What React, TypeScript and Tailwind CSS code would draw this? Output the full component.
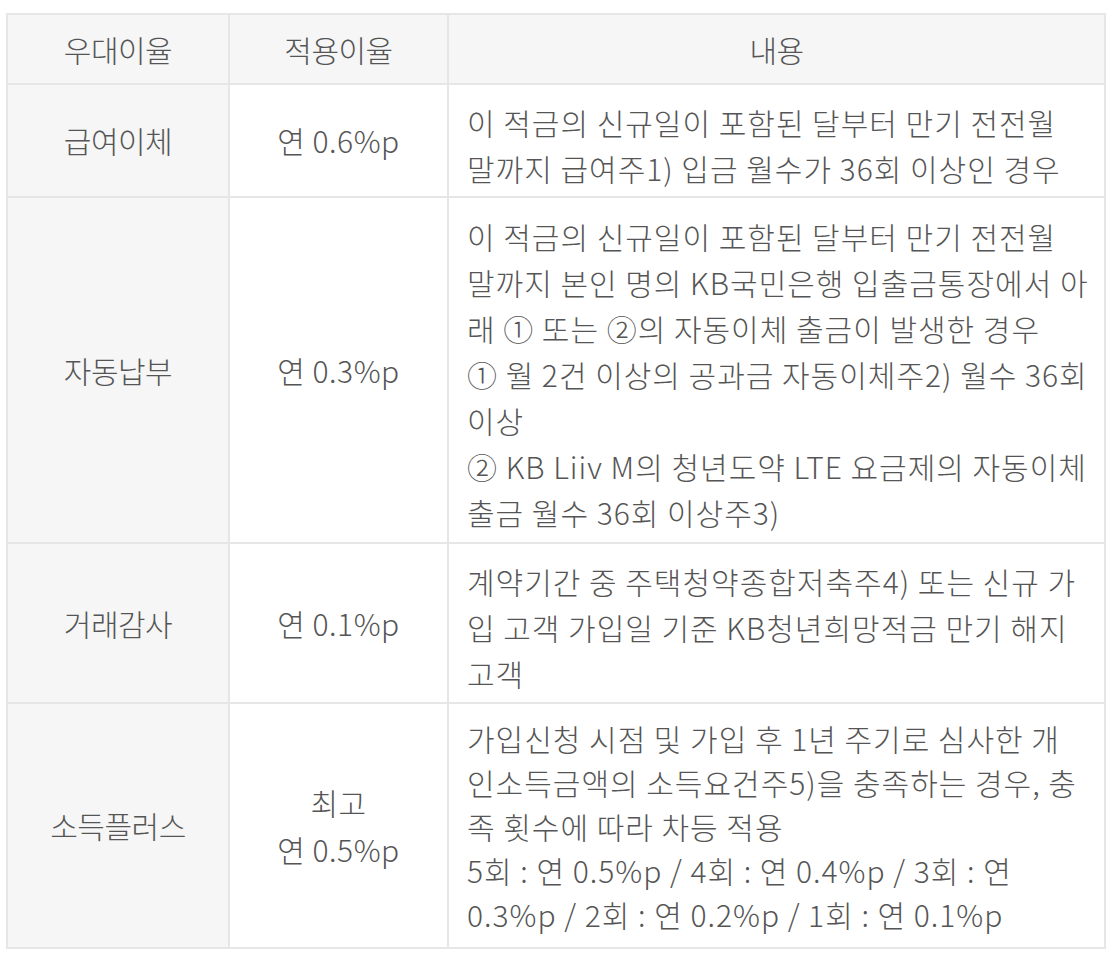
const rows = [
  {
    name: "급여이체",
    rate: ["연 0.6%p"],
    h: "h-[111px]",
    text: "pt-[8px] leading-[46px]",
    lines: [
      "이 적금의 신규일이 포함된 달부터 만기 전전월",
      "말까지 급여주1) 입금 월수가 36회 이상인 경우",
    ],
  },
  {
    name: "자동납부",
    rate: ["연 0.3%p"],
    h: "h-[344px]",
    text: "pt-[8px] leading-[46px]",
    lines: [
      "이 적금의 신규일이 포함된 달부터 만기 전전월",
      "말까지 본인 명의 KB국민은행 입출금통장에서 아",
      "래 ① 또는 ②의 자동이체 출금이 발생한 경우",
      "① 월 2건 이상의 공과금 자동이체주2) 월수 36회",
      "이상",
      "② KB Liiv M의 청년도약 LTE 요금제의 자동이체",
      "출금 월수 36회 이상주3)",
    ],
  },
  {
    name: "거래감사",
    rate: ["연 0.1%p"],
    h: "h-[158px]",
    text: "pt-[8px] leading-[46px]",
    lines: [
      "계약기간 중 주택청약종합저축주4) 또는 신규 가",
      "입 고객 가입일 기준 KB청년희망적금 만기 해지",
      "고객",
    ],
  },
  {
    name: "소득플러스",
    rate: ["최고", "연 0.5%p"],
    h: "h-[243px]",
    text: "leading-[44px]",
    lines: [
      "가입신청 시점 및 가입 후 1년 주기로 심사한 개",
      "인소득금액의 소득요건주5)을 충족하는 경우, 충",
      "족 횟수에 따라 차등 적용",
      "5회 : 연 0.5%p / 4회 : 연 0.4%p / 3회 : 연",
      "0.3%p / 2회 : 연 0.2%p / 1회 : 연 0.1%p",
    ],
  },
];

export default function App() {
  return (
    <div className="min-h-screen bg-white pt-[13px] pl-[6px] font-['Noto_Sans_CJK_KR',sans-serif] font-light text-[#555555]">
      <div className="grid w-[1100px] grid-cols-[220px_217px_655px] gap-[2px] bg-[#e6e6e6] p-[2px]">
        {/* header */}
        <div className="flex h-[68px] items-center justify-center bg-[#f6f6f6] text-[30px] tracking-[-0.5px]">우대이율</div>
        <div className="flex h-[68px] items-center justify-center bg-[#f6f6f6] text-[30px] tracking-[-0.5px]">적용이율</div>
        <div className="flex h-[68px] items-center justify-center bg-[#f6f6f6] text-[30px] tracking-[-0.5px]">내용</div>

        {rows.map((row) => (
          <>
            <div key={row.name + "a"} className={`flex items-center justify-center bg-[#f6f6f6] text-[30px] tracking-[-0.5px] ${row.h}`}>
              {row.name}
            </div>
            <div key={row.name + "b"} className={`flex flex-col items-center justify-center bg-white text-[30px] leading-[47px] tracking-[0.5px] ${row.h}`}>
              {row.rate.map((r) => (
                <span key={r}>{r}</span>
              ))}
            </div>
            <div key={row.name + "c"} className={`flex flex-col justify-center bg-white pl-[18px] text-[30px] tracking-[1px] ${row.h} ${row.text}`}>
              {row.lines.map((l, i) => (
                <span key={i} className="whitespace-nowrap">
                  {l}
                </span>
              ))}
            </div>
          </>
        ))}
      </div>
    </div>
  );
}
